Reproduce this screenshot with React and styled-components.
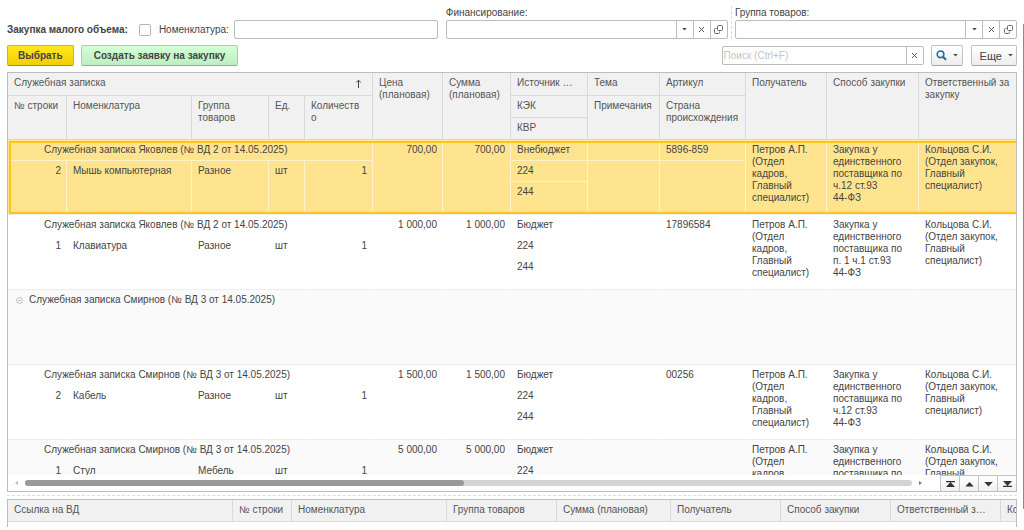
import React from "react";
import styled, { createGlobalStyle, css } from "styled-components";

const Global = createGlobalStyle`
  * { box-sizing: border-box; }
  body { margin: 0; background: #fff; overflow: hidden; }
  body, button, input, table {
    font-family: "Liberation Sans", Arial, sans-serif;
    font-size: 10px;
    line-height: 12px;
    color: #444;
  }
`;

const Page = styled.div`
  display: flex;
  height: 100vh;
  padding-bottom: 3px;
`;
const Content = styled.main`
  flex: 1;
  min-width: 0;
  display: flex;
  flex-direction: column;
  padding: 6px 6px 0 7px;
`;
const PageScroll = styled.div`
  width: 1px;
  margin: 24px 0 18px;
  background: #8c8c8c;
`;

const Filters = styled.div`
  display: flex;
  align-items: flex-end;
  height: 33px;
`;
const InlineLabel = styled.label`
  display: flex;
  align-items: center;
  height: 19px;
  white-space: nowrap;
  font-weight: ${(p) => (p.$bold ? "bold" : "normal")};
`;
const Check = styled.input`
  appearance: none;
  width: 12px;
  height: 12px;
  margin: 0 8px 3px 11px;
  border: 1px solid #b5b5b5;
  border-radius: 2px;
  background: #fff;
`;
const NameInput = styled.input`
  width: 204px;
  height: 19px;
  margin: 0 8px 0 5px;
  border: 1px solid #bcbcbc;
  border-radius: 2px;
`;
const Field = styled.div`
  flex: 1;
  display: flex;
  flex-direction: column;
  gap: 1px;
  label { align-self: flex-start; }
`;
const Combo = styled.div`
  display: flex;
  height: 19px;
  border: 1px solid #bcbcbc;
  border-radius: 2px;
  background: #fff;
  input {
    flex: 1;
    min-width: 0;
    padding: 0 1px;
    border: 0;
    background: none;
    outline: none;
  }
  input::placeholder { color: #c4c4c4; opacity: 1; }
`;
const ComboButton = styled.button`
  width: 17px;
  padding: 0;
  border: 0;
  border-left: 1px solid #bcbcbc;
  background: none;
  display: flex;
  align-items: center;
  justify-content: center;
`;
const VSplit = styled.div`
  height: 33px;
  margin: 0 3px;
  border-left: 1px dashed #dcdcdc;
`;

const Toolbar = styled.div`
  display: flex;
  align-items: center;
  gap: 7px;
  height: 21px;
  margin: 6px 0;
`;
const Button = styled.button`
  height: 21px;
  padding: ${(p) => p.$pad || "0 12px"};
  border: 1px solid ${(p) => p.$border || "#c2c2c2"};
  border-bottom-color: ${(p) => p.$edge || "#a8a8a8"};
  border-radius: 2px;
  background: ${(p) => p.$fill || "linear-gradient(#fff, #ededed)"};
  font-weight: ${(p) => (p.$bold ? "bold" : "normal")};
  font-size: ${(p) => (p.$large ? "11px" : "10px")};
  white-space: nowrap;
  display: flex;
  align-items: center;
  justify-content: center;
  gap: 6px;
`;
const Search = styled(Combo)`
  width: 202px;
  margin-left: auto;
`;
const Tools = styled.div`
  display: flex;
  gap: 8px;
`;

const Panel = styled.section`
  display: flex;
  flex-direction: column;
  overflow: hidden;
  border: 1px solid #bdbdbd;
  ${(p) =>
    p.$main
      ? css`
          flex: 1;
          min-height: 0;
        `
      : css`
          height: 28px;
          flex: none;
          border-bottom: 0;
        `}
`;
const Viewport = styled.div`
  flex: 1;
  min-height: 0;
  overflow: hidden;
`;
const Grid = styled.table`
  width: 100%;
  table-layout: fixed;
  border-collapse: separate;
  border-spacing: 0;
`;
const Head = styled.th`
  height: ${(p) => p.$h || 22}px;
  padding: 4px 5px 0 6px;
  vertical-align: top;
  text-align: left;
  font-weight: normal;
  color: #555;
  background: #f1f1f1;
  border-right: 1px solid #d9d9d9;
  border-bottom: 1px solid #d9d9d9;
  overflow: hidden;
  white-space: ${(p) => (p.$clip ? "nowrap" : "normal")};
  text-overflow: ellipsis;
`;
const SortHead = styled.div`
  display: flex;
  align-items: center;
  justify-content: space-between;
  padding-right: 5px;
`;
const Cell = styled.td`
  height: ${(p) => p.$h || 21}px;
  padding: 4px 5px 0 6px;
  padding-left: ${(p) => p.$indent || 6}px;
  vertical-align: top;
  text-align: ${(p) => (p.$right ? "right" : "left")};
  border-right: 1px solid transparent;
  border-bottom: 1px solid transparent;
`;
const Record = styled.tbody`
  background: ${(p) => (p.$alt ? "#fafafa" : "#fff")};
  tr:last-child > td, td.full { border-bottom-color: #ededed; }
  ${(p) =>
    p.$selected &&
    css`
      background: #ffe48f;
      outline: 2px solid #fbc51d;
      outline-offset: -3px;
      td { border-right-color: #fff3ca; border-bottom-color: #fff3ca; }
    `}
`;
const GroupLine = styled.div`
  display: flex;
  align-items: center;
  gap: 6px;
`;

const ScrollRow = styled.div`
  display: flex;
  height: 16px;
  flex: none;
  align-items: center;
`;
const Arrow = styled.span`
  width: 17px;
  display: flex;
  justify-content: center;
`;
const Track = styled.div`
  flex: 1;
  height: 6px;
  border-radius: 3px;
  background: #d4d4d4;
`;
const Thumb = styled.div`
  width: 49.5%;
  height: 6px;
  border-radius: 3px;
  background: #999;
`;
const Nav = styled.div`
  display: flex;
  align-self: stretch;
  margin-left: 11px;
  border-top: 1px solid #c4c4c4;
`;
const NavButton = styled.button`
  width: 19px;
  padding: 0;
  border: 0;
  border-left: 1px solid #c4c4c4;
  background: linear-gradient(#fff, #f0f0f0);
  display: flex;
  align-items: center;
  justify-content: center;
`;
const HSplit = styled.div`
  flex: none;
  height: 7px;
  display: flex;
  align-items: center;
  &::after {
    content: "";
    flex: 1;
    border-top: 1px dashed #dcdcdc;
  }
`;

const Caret = () => (
  <svg width="5" height="3" viewBox="0 0 5 3"><path d="M.2 0h4.6L2.5 2.6z" fill="#4d4d4d" /></svg>
);
const Cross = () => (
  <svg width="7" height="7" viewBox="0 0 7 7"><path d="M1 1l5 5M6 1l-5 5" stroke="#555" strokeWidth="1" /></svg>
);
const Open = () => (
  <svg width="9" height="9" viewBox="0 0 9 9" fill="none" stroke="#666" strokeWidth="1">
    <path d="M3.5 1.5q0-1 1-1h3q1 0 1 1v3q0 1-1 1h-3q-1 0-1-1zM2.5 3.5h-1q-1 0-1 1v3q0 1 1 1h3q1 0 1-1v-1" />
  </svg>
);
const Magnifier = () => (
  <svg width="11" height="11" viewBox="0 0 11 11" fill="none" stroke="#1c6fab">
    <circle cx="4.5" cy="4.3" r="3.3" strokeWidth="1.6" />
    <path d="M7 6.8L10 9.8" strokeWidth="2.2" />
  </svg>
);
const SortArrow = () => (
  <svg width="7" height="9" viewBox="0 0 7 9" fill="none" stroke="#444">
    <path d="M3.5 9V1.5M1.2 3.5L3.5 1.2l2.3 2.3" />
  </svg>
);
const Minus = () => (
  <svg width="7" height="7" viewBox="0 0 7 7" fill="none" stroke="#b0b0b0" strokeWidth="0.8">
    <circle cx="3.5" cy="3.5" r="2.9" />
    <path d="M2 3.5h3" />
  </svg>
);
const Dot = ({ flip }) => (
  <svg width="3" height="4" viewBox="0 0 3 4">
    <path d={flip ? "M0 0v4l3-2z" : "M3 0v4L0 2z"} fill={flip ? "#777" : "#bbb"} />
  </svg>
);
const navPaths = {
  first: "M0 0h9v1.3H0zM4.5 1L9 6H0z",
  up: "M4.5 1L8.7 5.6H.3z",
  down: "M.3 1h8.4L4.5 5.6z",
  last: "M0 0h9L4.5 5zM0 4.7h9V6H0z",
};
const NavIcon = ({ kind }) => (
  <svg width="9" height="6" viewBox="0 0 9 6"><path d={navPaths[kind]} fill="#333" /></svg>
);

const mainCols = [59, 125, 77, 36, 68, 70, 68, 77, 72, 86, 81, 92, 101];
const subCols = [225, 59, 155, 110, 114, 110, 110, 110, 60];
const subHeads = [
  "Ссылка на ВД", "№ строки", "Номенклатура", "Группа товаров", "Сумма (плановая)",
  "Получатель", "Способ закупки", "Ответственный з…", "Количество",
];

const receiver = "Петров А.П. (Отдел кадров, Главный специалист)";
const manager = "Кольцова С.И. (Отдел закупок, Главный специалист)";
const methodA = ["Закупка у единственного поставщика по", "ч.12 ст.93", "44-ФЗ"];
const methodB = ["Закупка у единственного поставщика по", "п. 1 ч.1 ст.93", "44-ФЗ"];

const rows = [
  { memo: "Служебная записка Яковлев (№ ВД 2 от 14.05.2025)", n: 2, name: "Мышь компьютерная", group: "Разное", price: "700,00", source: "Внебюджет", article: "5896-859", method: methodA, selected: true },
  { memo: "Служебная записка Яковлев (№ ВД 2 от 14.05.2025)", n: 1, name: "Клавиатура", group: "Разное", price: "1 000,00", source: "Бюджет", article: "17896584", method: methodB },
  { memo: "Служебная записка Смирнов (№ ВД 3 от 14.05.2025)", folder: true, alt: true },
  { memo: "Служебная записка Смирнов (№ ВД 3 от 14.05.2025)", n: 2, name: "Кабель", group: "Разное", price: "1 500,00", source: "Бюджет", article: "00256", method: methodA },
  { memo: "Служебная записка Смирнов (№ ВД 3 от 14.05.2025)", n: 1, name: "Стул", group: "Мебель", price: "5 000,00", source: "Бюджет", article: "", method: methodA, alt: true },
];

const Columns = ({ widths }) => (
  <colgroup>{widths.map((w, i) => <col key={i} width={w} />)}</colgroup>
);

function DataRecord({ row }) {
  if (row.folder) {
    return (
      <Record $alt={row.alt}>
        <tr>
          <Cell className="full" colSpan={13} $h={75} $indent={8}>
            <GroupLine><Minus />{row.memo}</GroupLine>
          </Cell>
        </tr>
      </Record>
    );
  }
  return (
    <Record $alt={row.alt} $selected={row.selected}>
      <tr>
        <Cell colSpan={5} $indent={36}>{row.memo}</Cell>
        <Cell className="full" rowSpan={3} $right>{row.price}</Cell>
        <Cell className="full" rowSpan={3} $right>{row.price}</Cell>
        <Cell>{row.source}</Cell>
        <Cell />
        <Cell>{row.article}</Cell>
        <Cell className="full" rowSpan={3}>{receiver}</Cell>
        <Cell className="full" rowSpan={3}>
          {row.method.map((line) => <div key={line}>{line}</div>)}
        </Cell>
        <Cell className="full" rowSpan={3}>{manager}</Cell>
      </tr>
      <tr>
        <Cell className="full" rowSpan={2} $right>{row.n}</Cell>
        <Cell className="full" rowSpan={2}>{row.name}</Cell>
        <Cell className="full" rowSpan={2}>{row.group}</Cell>
        <Cell className="full" rowSpan={2}>шт</Cell>
        <Cell className="full" rowSpan={2} $right>1</Cell>
        <Cell>224</Cell>
        <Cell className="full" rowSpan={2} />
        <Cell className="full" rowSpan={2} />
      </tr>
      <tr><Cell $h={33}>244</Cell></tr>
    </Record>
  );
}

const ComboField = ({ id, label }) => (
  <Field>
    <label htmlFor={id}>{label}</label>
    <Combo>
      <input id={id} />
      <ComboButton aria-label="Выбрать из списка"><Caret /></ComboButton>
      <ComboButton aria-label="Очистить"><Cross /></ComboButton>
      <ComboButton aria-label="Открыть"><Open /></ComboButton>
    </Combo>
  </Field>
);

export default function App() {
  return (
    <Page>
      <Global />
      <Content>
        <Filters>
          <InlineLabel $bold htmlFor="small">Закупка малого объема:</InlineLabel>
          <Check id="small" type="checkbox" />
          <InlineLabel htmlFor="name">Номенклатура:</InlineLabel>
          <NameInput id="name" />
          <ComboField id="finance" label="Финансирование:" />
          <VSplit />
          <ComboField id="goods" label="Группа товаров:" />
        </Filters>

        <Toolbar>
          <Button $bold $pad="0 10px" $border="#cdb526" $edge="#a8921a" $fill="linear-gradient(#ffe81f, #f2cf00)">Выбрать</Button>
          <Button $bold $border="#a9cfab" $edge="#8db591" $fill="linear-gradient(#d3ffd6, #bdeec1)">
            Создать заявку на закупку
          </Button>
          <Search>
            <input aria-label="Поиск" placeholder="Поиск (Ctrl+F)" />
            <ComboButton aria-label="Очистить поиск"><Cross /></ComboButton>
          </Search>
          <Tools>
            <Button $pad="0 4px" aria-label="Найти"><Magnifier /><Caret /></Button>
            <Button $pad="0 3px 0 8px" $large>Еще<Caret /></Button>
          </Tools>
        </Toolbar>

        <Panel $main>
          <Viewport>
            <Grid>
              <Columns widths={mainCols} />
              <thead>
                <tr>
                  <Head $h={23} colSpan={5}><SortHead>Служебная записка<SortArrow /></SortHead></Head>
                  <Head rowSpan={3}>Цена (плановая)</Head>
                  <Head rowSpan={3}>Сумма (плановая)</Head>
                  <Head $clip>Источник …</Head>
                  <Head>Тема</Head>
                  <Head>Артикул</Head>
                  <Head rowSpan={3}>Получатель</Head>
                  <Head rowSpan={3}>Способ закупки</Head>
                  <Head rowSpan={3}>Ответственный за закупку</Head>
                </tr>
                <tr>
                  <Head rowSpan={2}>№ строки</Head>
                  <Head rowSpan={2}>Номенклатура</Head>
                  <Head rowSpan={2}>Группа товаров</Head>
                  <Head rowSpan={2}>Ед.</Head>
                  <Head rowSpan={2}>Количеств<br />о</Head>
                  <Head>КЭК</Head>
                  <Head rowSpan={2}>Примечания</Head>
                  <Head rowSpan={2}>Страна происхождения</Head>
                </tr>
                <tr><Head>КВР</Head></tr>
              </thead>
              {rows.map((row, i) => <DataRecord key={i} row={row} />)}
            </Grid>
          </Viewport>
          <ScrollRow>
            <Arrow><Dot /></Arrow>
            <Track><Thumb /></Track>
            <Arrow><Dot flip /></Arrow>
            <Nav>
              <NavButton aria-label="В начало"><NavIcon kind="first" /></NavButton>
              <NavButton aria-label="Вверх"><NavIcon kind="up" /></NavButton>
              <NavButton aria-label="Вниз"><NavIcon kind="down" /></NavButton>
              <NavButton aria-label="В конец"><NavIcon kind="last" /></NavButton>
            </Nav>
          </ScrollRow>
        </Panel>

        <HSplit />

        <Panel>
          <Grid>
            <Columns widths={subCols} />
            <thead>
              <tr>{subHeads.map((h) => <Head key={h} $clip>{h}</Head>)}</tr>
            </thead>
          </Grid>
        </Panel>
      </Content>
      <PageScroll />
    </Page>
  );
}
